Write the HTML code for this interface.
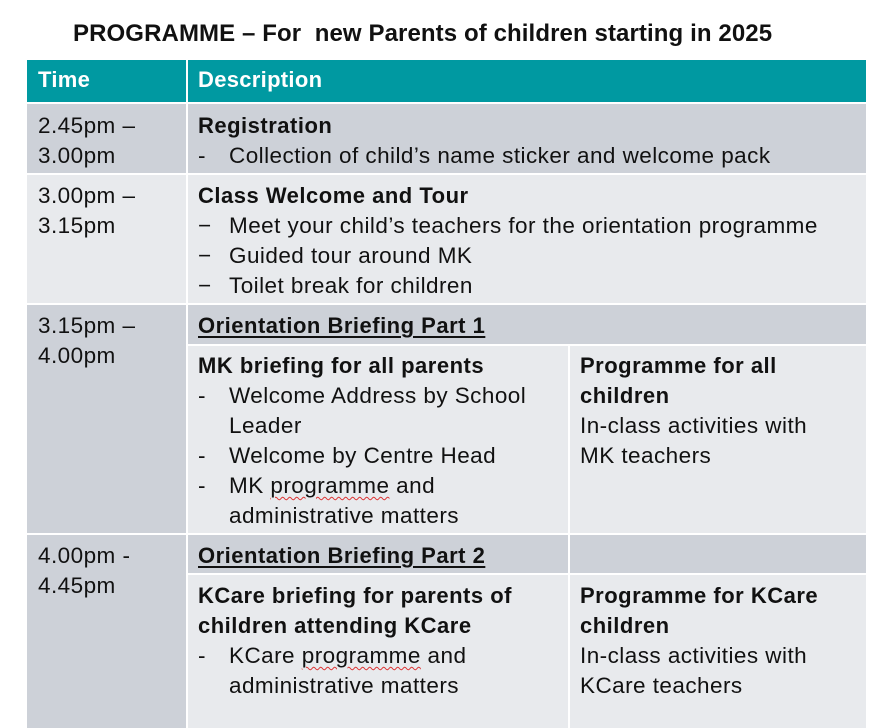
<!DOCTYPE html>
<html><head><meta charset="utf-8"><style>
body{margin:0;width:891px;height:728px;background:#fff;position:relative;overflow:hidden;font-family:"Liberation Sans",Arial,sans-serif;color:#111;}
.b{position:absolute;}
.d{background:#cdd1d8}.l{background:#e8eaed}.h{background:#0099a1}
.t{position:absolute;font-size:22.5px;letter-spacing:0.45px;line-height:30px;white-space:nowrap}
.w{color:#fff;font-weight:bold;font-size:22px;letter-spacing:0.3px}
.bo{font-weight:bold;font-size:22px;letter-spacing:0.5px}
u{text-decoration-thickness:2px;text-underline-offset:3px}
.sq{text-decoration:underline wavy #d33;text-decoration-thickness:1px;text-underline-offset:3px}
</style></head><body>
<div class="t bo" style="left:73px;top:19px;font-size:24px;letter-spacing:0.1px">PROGRAMME – For&nbsp; new Parents of children starting in 2025</div>
<div class="b h" style="left:27px;top:60px;width:159px;height:42px"></div>
<div class="b h" style="left:188px;top:60px;width:678px;height:42px"></div>
<div class="b d" style="left:27px;top:104px;width:159px;height:69px"></div>
<div class="b d" style="left:188px;top:104px;width:678px;height:69px"></div>
<div class="b l" style="left:27px;top:175px;width:159px;height:128px"></div>
<div class="b l" style="left:188px;top:175px;width:678px;height:128px"></div>
<div class="b d" style="left:27px;top:305px;width:159px;height:228px"></div>
<div class="b d" style="left:188px;top:305px;width:678px;height:39px"></div>
<div class="b l" style="left:188px;top:346px;width:380px;height:187px"></div>
<div class="b l" style="left:570px;top:346px;width:296px;height:187px"></div>
<div class="b d" style="left:27px;top:535px;width:159px;height:193px"></div>
<div class="b d" style="left:188px;top:535px;width:380px;height:38px"></div>
<div class="b d" style="left:570px;top:535px;width:296px;height:38px"></div>
<div class="b l" style="left:188px;top:575px;width:380px;height:153px"></div>
<div class="b l" style="left:570px;top:575px;width:296px;height:153px"></div>

<div class="t w" style="left:38px;top:65px">Time</div>
<div class="t w" style="left:198px;top:65px">Description</div>

<div class="t" style="left:38px;top:111px">2.45pm –<br>3.00pm</div>
<div class="t bo" style="left:198px;top:111px">Registration</div>
<div class="t" style="left:198px;top:141px">-</div><div class="t" style="left:229px;top:141px">Collection of child’s name sticker and welcome pack</div>

<div class="t" style="left:38px;top:181px">3.00pm –<br>3.15pm</div>
<div class="t bo" style="left:198px;top:181px">Class Welcome and Tour</div>
<div class="t" style="left:198px;top:211px">−<br>−<br>−</div>
<div class="t" style="left:229px;top:211px">Meet your child’s teachers for the orientation programme<br>Guided tour around MK<br>Toilet break for children</div>

<div class="t" style="left:38px;top:311px">3.15pm –<br>4.00pm</div>
<div class="t bo" style="left:198px;top:311px"><u>Orientation Briefing Part 1</u></div>
<div class="t bo" style="left:198px;top:351px">MK briefing for all parents</div>
<div class="t" style="left:198px;top:381px">-<br><br>-<br>-</div>
<div class="t" style="left:229px;top:381px">Welcome Address by School<br>Leader<br>Welcome by Centre Head<br>MK <span class="sq">programme</span> and<br>administrative matters</div>
<div class="t bo" style="left:580px;top:351px">Programme for all<br>children</div>
<div class="t" style="left:580px;top:411px">In-class activities with<br>MK teachers</div>

<div class="t" style="left:38px;top:541px">4.00pm -<br>4.45pm</div>
<div class="t bo" style="left:198px;top:541px"><u>Orientation Briefing Part 2</u></div>
<div class="t bo" style="left:198px;top:581px">KCare briefing for parents of<br>children attending KCare</div>
<div class="t" style="left:198px;top:641px">-</div>
<div class="t" style="left:229px;top:641px">KCare <span class="sq">programme</span> and<br>administrative matters</div>
<div class="t bo" style="left:580px;top:581px">Programme for KCare<br>children</div>
<div class="t" style="left:580px;top:641px">In-class activities with<br>KCare teachers</div>
</body></html>
